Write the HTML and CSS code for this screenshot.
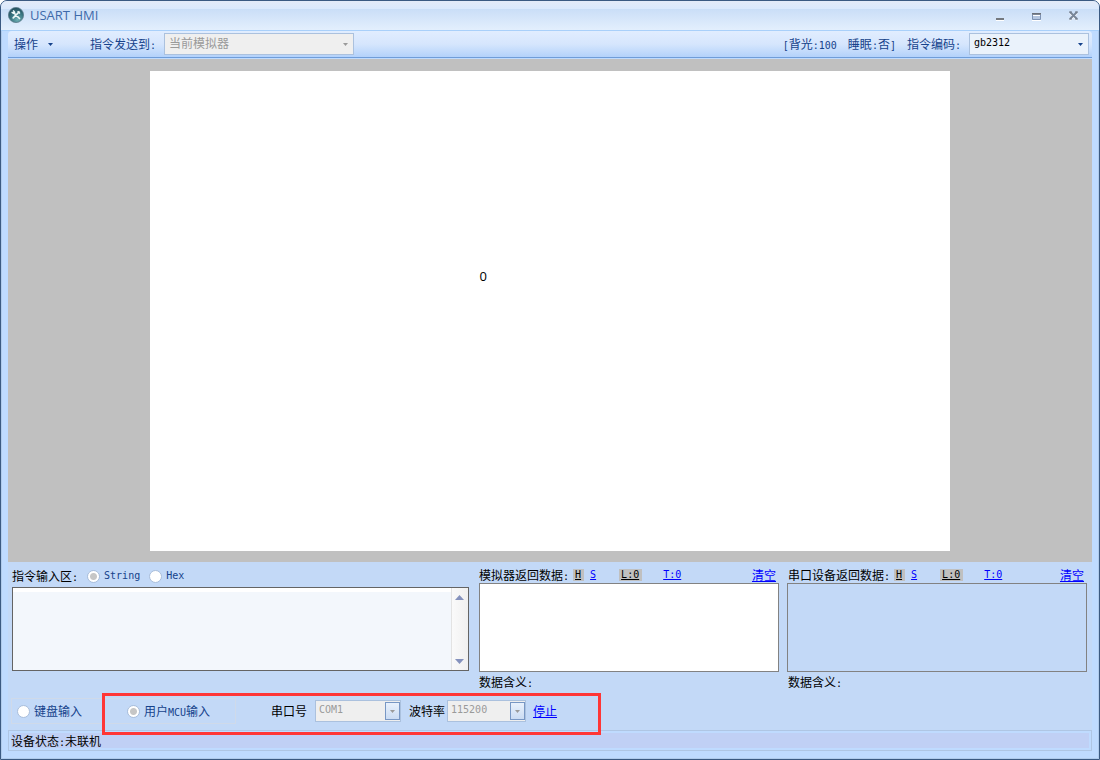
FILE: index.html
```html
<!DOCTYPE html>
<html lang="zh-CN">
<head>
<meta charset="utf-8">
<title>USART HMI</title>
<link rel="stylesheet" href="styles.css">
</head>
<body>
<div class="window">
  <header class="titlebar">
    <svg class="app-icon" viewBox="0 0 16 16" aria-hidden="true">
      <defs>
        <radialGradient id="orb" cx="0.6" cy="0.8" r="0.9">
          <stop offset="0" stop-color="#6fb0b4"/>
          <stop offset="0.5" stop-color="#37747f"/>
          <stop offset="1" stop-color="#1d4252"/>
        </radialGradient>
      </defs>
      <circle cx="8" cy="8" r="7.6" fill="url(#orb)" stroke="#5d7c8c" stroke-width="0.8"/>
      <path d="M5.5 5.5 11.5 11.5M11 5 5.2 10.8" stroke="#eef8f8" stroke-width="1.7" stroke-linecap="round"/>
      <path d="M3.6 5.2 5.4 6.4 6.6 5.2 5.2 3.4M9.6 4.2 12 6.4" fill="none" stroke="#eef8f8" stroke-width="1.4"/>
    </svg>
    <h1 class="title">USART HMI</h1>
    <div class="window-buttons">
      <button class="window-button" type="button" aria-label="最小化">
        <svg viewBox="0 0 12 12"><path d="M2 10.5h8" stroke="#fff" stroke-width="1"/><path d="M2 9h8" stroke="#75797f" stroke-width="2"/></svg>
      </button>
      <button class="window-button" type="button" aria-label="最大化">
        <svg viewBox="0 0 12 12"><path d="M1 10.5h9" stroke="#fff"/><path d="M1.5 3.5h8v6h-8z" fill="#b4c6e0" stroke="#7d92b3"/><path d="M1 3.5h9" stroke="#6b7079"/><path d="M1 4.5h9" stroke="#7d8796"/><path d="M2 5.5h7" stroke="#fff"/></svg>
      </button>
      <button class="window-button" type="button" aria-label="关闭">
        <svg viewBox="0 0 12 12"><path d="M2 3 9 10M9 3 2 10" stroke="#fff" stroke-width="2"/><path d="M2 2 9 9M9 2 2 9" stroke="#7a8799" stroke-width="2"/><path d="M1 2h3M7 2h3M1 9h3M7 9h3" stroke="#6f7886"/></svg>
      </button>
    </div>
  </header>

  <div class="toolbar">
    <button class="menu-button" type="button">操作<svg class="arrow" viewBox="0 0 5 3"><path d="M0 0h5L2.5 3z"/></svg></button>
    <label class="target-label" for="target">指令发送到<span class="mono">:</span></label>
    <span class="combo combo-target disabled">
      <select id="target" disabled><option>当前模拟器</option></select>
      <span class="drop"><svg class="arrow" viewBox="0 0 5 3"><path d="M0 0h5L2.5 3z"/></svg></span>
    </span>
    <span class="state"><span class="mono">[</span>背光<span class="mono">:100</span></span>
    <span>睡眠<span class="mono">:</span>否<span class="mono">]</span></span>
    <label for="encoding">指令编码<span class="mono">:</span></label>
    <span class="combo combo-encoding">
      <select class="mono" id="encoding"><option>gb2312</option></select>
      <span class="drop"><svg class="arrow" viewBox="0 0 5 3"><path d="M0 0h5L2.5 3z"/></svg></span>
    </span>
  </div>

  <main class="canvas">
    <div class="screen"><span class="screen-text">0</span></div>
  </main>

  <section class="panels">
    <div class="input-panel">
      <div class="input-head">
        <label for="command">指令输入区<span class="mono">:</span></label>
        <label class="choice"><input type="radio" name="format" checked disabled><span class="mono">String</span></label>
        <label class="choice"><input type="radio" name="format" disabled><span class="mono">Hex</span></label>
      </div>
      <div class="command-box">
        <textarea id="command"></textarea>
        <div class="scrollbar" aria-hidden="true">
          <svg viewBox="0 0 9 5"><path d="M4.5 0 9 5H0z"/></svg>
          <svg viewBox="0 0 9 5"><path d="M0 0h9L4.5 5z"/></svg>
        </div>
      </div>
    </div>
    <div class="data-panel">
      <div class="data-head">
        <label for="sim-data">模拟器返回数据<span class="mono">:</span></label>
        <a class="mono picked" href="#">H</a><a class="mono" href="#">S</a><a class="mono picked wide" href="#">L:0</a><a class="mono total" href="#">T:0</a><a class="clear" href="#">清空</a>
      </div>
      <textarea class="data-box" id="sim-data" readonly></textarea>
      <p class="meaning">数据含义<span class="mono">:</span></p>
    </div>
    <div class="data-panel">
      <div class="data-head inset">
        <label for="port-data">串口设备返回数据<span class="mono">:</span></label>
        <a class="mono picked" href="#">H</a><a class="mono" href="#">S</a><a class="mono picked wide" href="#">L:0</a><a class="mono total" href="#">T:0</a><a class="clear" href="#">清空</a>
      </div>
      <textarea class="data-box inactive" id="port-data" readonly></textarea>
      <p class="meaning inset">数据含义<span class="mono">:</span></p>
    </div>
  </section>

  <section class="controls">
    <div class="source">
      <label class="choice"><input type="radio" name="source">键盘输入</label>
      <label class="choice"><input type="radio" name="source" checked disabled><span>用户<span class="mono">MCU</span>输入</span></label>
    </div>
    <label class="port-label" for="port">串口号</label>
    <span class="combo combo-port disabled boxed">
      <select class="mono" id="port" disabled><option>COM1</option></select>
      <span class="drop"><svg class="arrow" viewBox="0 0 5 3"><path d="M0 0h5L2.5 3z"/></svg></span>
    </span>
    <label class="baud-label" for="baud">波特率</label>
    <span class="combo combo-baud disabled boxed">
      <select class="mono" id="baud" disabled><option>115200</option></select>
      <span class="drop"><svg class="arrow" viewBox="0 0 5 3"><path d="M0 0h5L2.5 3z"/></svg></span>
    </span>
    <a class="stop" href="#">停止</a>
    <div class="highlight" aria-hidden="true"></div>
  </section>

  <footer class="status"><div class="status-text">设备状态<span class="mono">:</span>未联机</div></footer>
</div>
</body>
</html>
```
FILE: styles.css
```css
* {
  box-sizing: border-box;
}

body {
  margin: 0;
  background: #fff;
  color: #000;
  font: 12px/16px "Noto Sans CJK SC", sans-serif;
}

button,
select,
textarea {
  margin: 0;
  padding: 0;
  border: 0;
  border-radius: 0;
  background: none;
  color: inherit;
  font: inherit;
}

a {
  color: #00f;
}

.mono {
  font-family: "DejaVu Sans Mono", "Liberation Mono", monospace;
  font-size: 10px;
  line-height: 12px;
}

.window {
  display: flex;
  flex-direction: column;
  min-height: 100vh;
  padding: 0 7px 8px;
  border: 1px solid #3b5a82;
  border-radius: 7px 7px 0 0;
  background: #bfdbff;
  box-shadow: inset 0 0 0 1px #b0cbeb;
  overflow: hidden;
}

.titlebar {
  display: flex;
  align-items: center;
  height: 30px;
  margin: 0 -7px;
  padding: 0 13px 2px 7px;
  border-bottom: 1px solid #a9d0fa;
  background: linear-gradient(#e4ebf8 0, #dae9fd 8px, #cadef7 8px, #e3effd 29px);
}

.app-icon {
  width: 16px;
  height: 16px;
}

.title {
  margin: 0 auto 0 6px;
  color: #3e6aaa;
  font: 13px/16px "Open Sans", "Noto Sans", sans-serif;
}

.window-buttons {
  display: flex;
  gap: 13px;
}

.window-button {
  width: 24px;
  height: 16px;
}

.window-button svg {
  display: block;
  width: 12px;
  height: 12px;
  margin: 3px 6px 1px;
}

.toolbar {
  display: flex;
  align-items: center;
  height: 27px;
  margin-bottom: 1px;
  padding: 0 3px 0 6px;
  border-bottom: 1px solid #6f9dd9;
  border-radius: 4px 4px 0 0;
  background: linear-gradient(#e1edff, #d6e6fd 50%, #b3d2fb);
  color: #15428b;
}

.menu-button {
  display: flex;
  align-items: center;
  gap: 10px;
}

.arrow {
  display: block;
  width: 5px;
  height: 3px;
  fill: currentColor;
}

.target-label {
  margin: 0 8px 0 37px;
}

.state {
  margin-left: auto;
}

.state ~ span,
.state ~ label {
  margin-left: 11px;
}

.state ~ .combo {
  margin-left: 8px;
}

.combo {
  display: grid;
  height: 22px;
  border: 1px solid #abc1de;
  background: #eaf2fb;
  color: #15428b;
}

.combo select,
.drop {
  grid-area: 1 / 1;
}

.combo select {
  min-width: 0;
  padding: 0 20px 3px 4px;
  color: #000;
  opacity: 1;
  appearance: none;
}

.combo.disabled,
.combo.disabled select {
  background: #efefef;
  color: #9a9a9a;
}

.drop {
  display: flex;
  align-items: center;
  justify-content: center;
  justify-self: end;
  width: 15px;
  pointer-events: none;
}

.boxed .drop {
  height: 18px;
  align-self: center;
  border: 1px solid #7897c4;
  background: linear-gradient(#e9f1fc, #cbdcf3);
}

.combo.boxed select {
  padding-left: 3px;
}

.combo-target {
  width: 190px;
}

.combo-encoding {
  width: 120px;
}

.combo-port {
  width: 86px;
}

.combo-baud {
  width: 79px;
}

.canvas {
  display: flex;
  flex: 1;
  align-items: center;
  justify-content: center;
  padding: 12px 12px 11px;
  background: #c0c0c0;
}

.screen {
  position: relative;
  width: 100%;
  max-width: 800px;
  aspect-ratio: 5 / 3;
  background: #fff;
}

.screen-text {
  position: absolute;
  top: 41%;
  left: 41.2%;
  font: 13px/16px "Open Sans", sans-serif;
}

.panels {
  display: grid;
  grid-template-columns: minmax(0, 1fr) 300px 300px;
  gap: 8px;
  padding: 0 5px 0 4px;
  background: #c3d9f7;
}

.input-panel {
  padding-right: 2px;
}

.input-head {
  display: flex;
  align-items: center;
  gap: 9px;
  height: 25px;
  padding-top: 3px;
}

.choice {
  display: flex;
  align-items: center;
  gap: 4px;
  color: #15428b;
}

.choice input {
  width: 13px;
  height: 13px;
  margin: 0;
  border: 1px solid #a9bedb;
  border-radius: 50%;
  background: #fff;
  appearance: none;
}

.choice input:checked {
  background: radial-gradient(circle, #c6c6c6 3px, #fff 4px);
}

.command-box {
  display: flex;
  height: 84px;
  border: 1px solid #646464;
  background: #f3f7fc;
}

.command-box textarea {
  flex: 1;
  min-width: 0;
  border-top: 4px solid #fff;
  resize: none;
}

.scrollbar {
  display: flex;
  flex-direction: column;
  align-items: center;
  justify-content: space-between;
  width: 17px;
  padding: 7px 1px 6px 0;
  border-left: 1px solid #e3e3e3;
  background: linear-gradient(90deg, #fafafa, #f0f0f0);
}

.scrollbar svg {
  width: 9px;
  height: 5px;
  fill: #8592bd;
}

.data-head {
  display: flex;
  align-items: center;
  height: 21px;
  padding: 4px 3px 0 0;
}

.inset {
  padding-left: 1px;
}

.data-head a {
  margin-left: 6px;
}

.data-head .picked {
  margin-left: 4px;
  padding: 0 3px 0 2px;
  background: #c0c0c0;
  color: #000;
}

.data-head .wide {
  margin-left: 23px;
}

.data-head .total {
  margin-left: 21px;
}

.data-head .clear {
  margin-left: auto;
}

.data-box {
  display: block;
  width: 100%;
  height: 89px;
  border: 1px solid #828282;
  background: #fff;
  resize: none;
}

.data-box.inactive {
  background: #c3d9f7;
}

.meaning {
  margin: 0;
  padding-top: 2px;
}

.controls {
  position: relative;
  display: flex;
  align-items: center;
  padding: 8px 3px 6px;
  background: #c3d9f7;
}

.source {
  display: flex;
  align-items: center;
  gap: 45px;
  width: 225px;
  height: 26px;
  padding-left: 5px;
  border: 1px solid #cfdaea;
}

.port-label {
  margin: 0 8px 0 35px;
}

.baud-label {
  margin: 0 2px 0 8px;
}

.stop {
  margin-left: 7px;
}

.highlight {
  position: absolute;
  top: 3px;
  left: 94px;
  width: 499px;
  height: 42px;
  border: 3px solid #ff3636;
  pointer-events: none;
}

.status {
  padding: 2px;
  border: 1px solid #afc6e4;
}

.status-text {
  height: 15px;
  background: #c0d0f5;
  line-height: 15px;
}
```
